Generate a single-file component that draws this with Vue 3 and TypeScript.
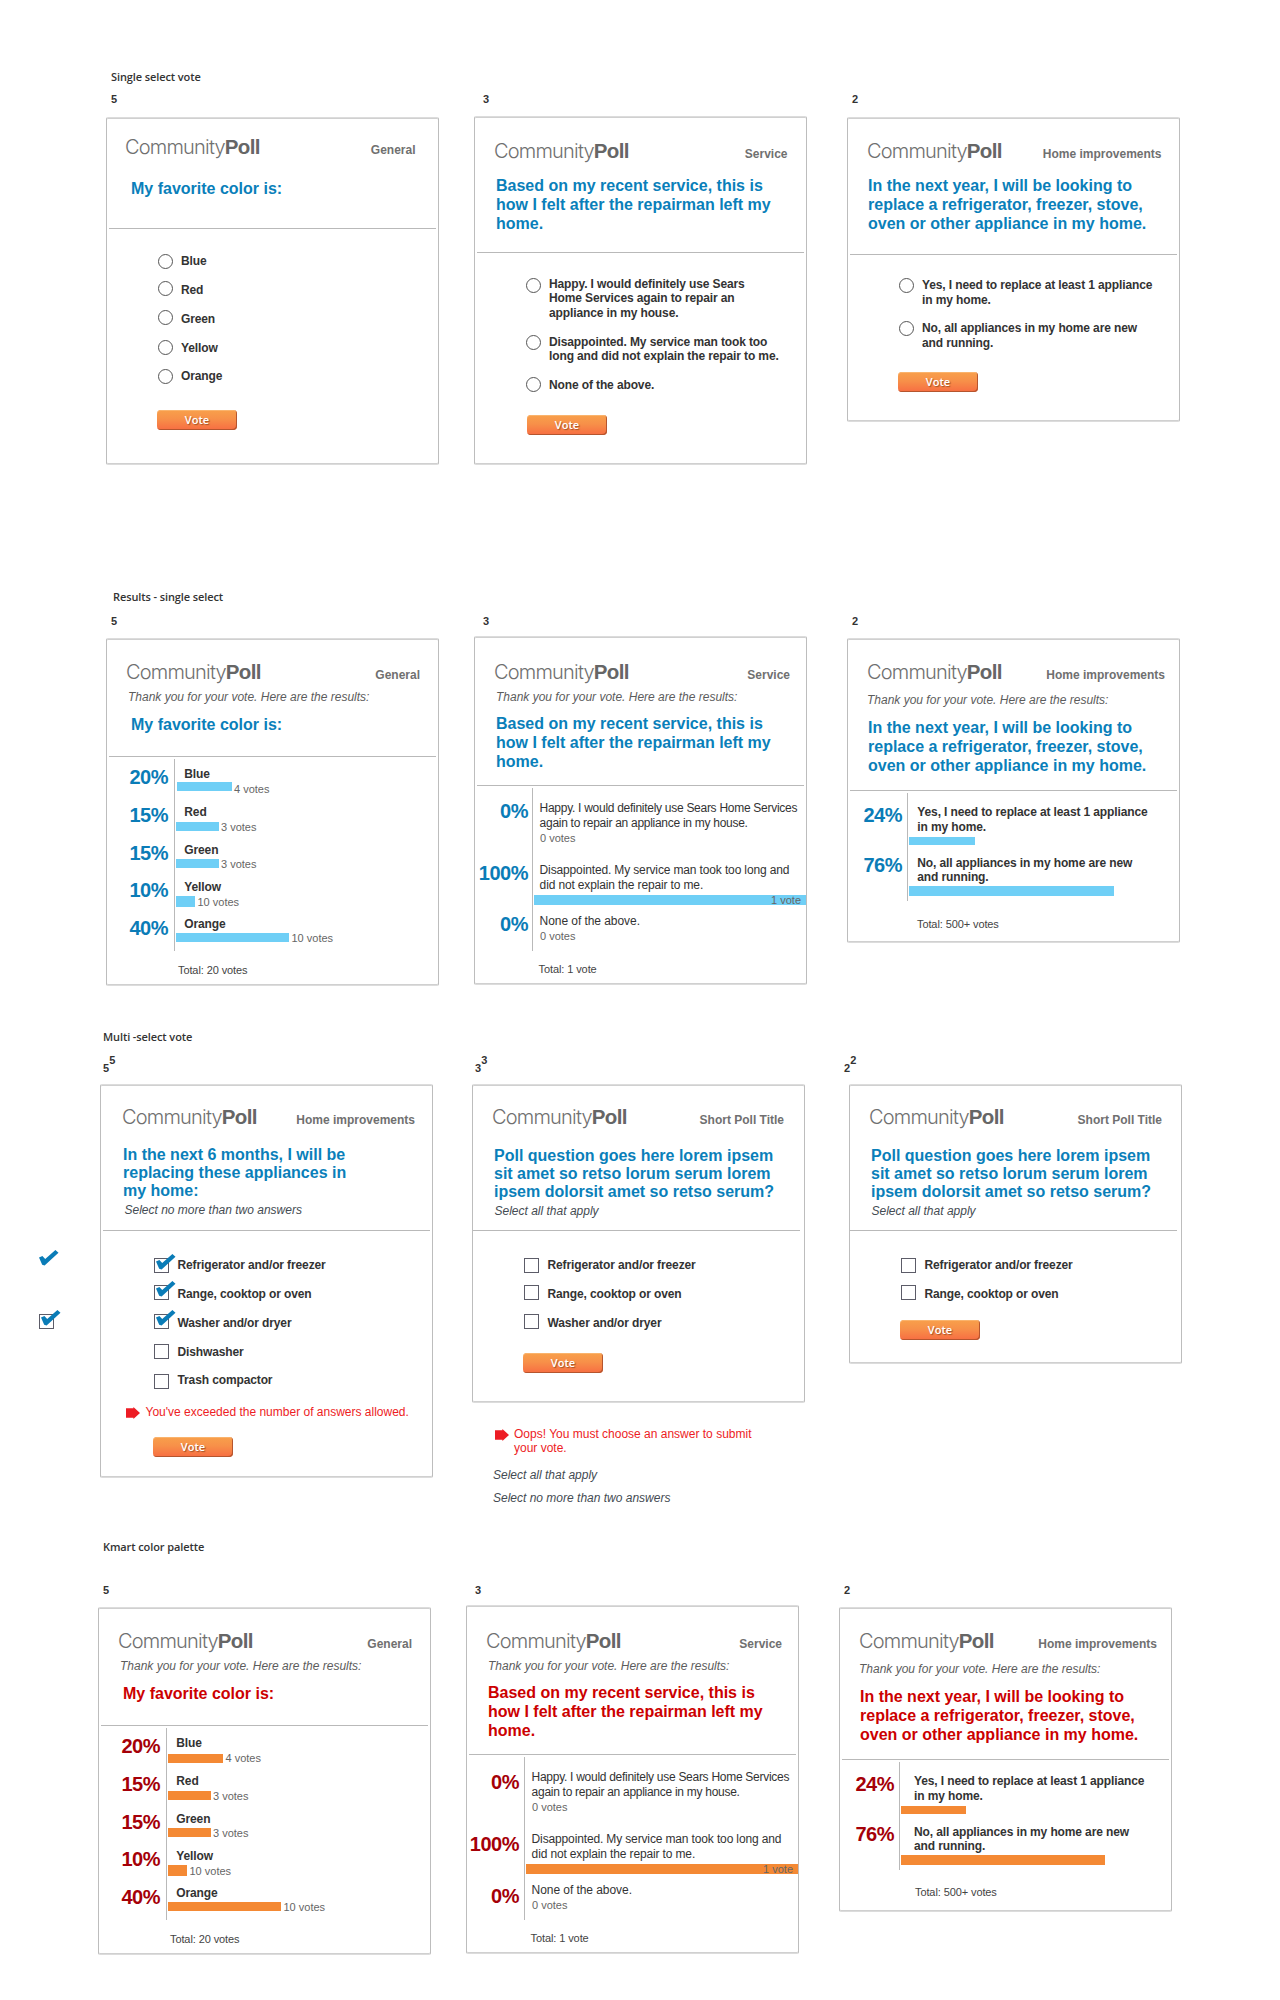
<script setup lang="ts">
interface Choice {
  label: string
  checked?: boolean
  percent?: string
  votes?: string
  bar?: number
}

interface Poll {
  kind: 'radio' | 'check' | 'result'
  size: string
  category: string
  question: string
  choices: Choice[]
  hint?: string
  error?: string
  total?: string
  notes?: boolean
}

interface Board {
  id: string
  title: string
  doubled?: boolean
  polls: Poll[]
}

const colorQuestion = 'My favorite color is:'
const serviceQuestion = 'Based on my recent service, this is\nhow I felt after the repairman left my\nhome.'
const homeQuestion = 'In the next year, I will be looking to\nreplace a refrigerator, freezer, stove,\noven or other appliance in my home.'
const loremQuestion = 'Poll question goes here lorem ipsem\nsit amet so retso lorum serum lorem\nipsem dolorsit amet so retso serum?'
const yes = 'Yes, I need to replace at least 1 appliance\nin my home.'
const no = 'No, all appliances in my home are new\nand running.'
const multi = 'Select all that apply'
const limited = 'Select no more than two answers'
const thanks = 'Thank you for your vote. Here are the results:'

const results = (yesBar: number, noBar: number): Poll[] => [
  {
    kind: 'result', size: '5', category: 'General', question: colorQuestion, total: 'Total: 20 votes',
    choices: [
      { label: 'Blue', percent: '20%', votes: '4 votes', bar: 55 },
      { label: 'Red', percent: '15%', votes: '3 votes', bar: 42.5 },
      { label: 'Green', percent: '15%', votes: '3 votes', bar: 42.5 },
      { label: 'Yellow', percent: '10%', votes: '10 votes', bar: 19 },
      { label: 'Orange', percent: '40%', votes: '10 votes', bar: 113 },
    ],
  },
  {
    kind: 'result', size: '3', category: 'Service', question: serviceQuestion, total: 'Total: 1 vote',
    choices: [
      { label: 'Happy. I would definitely use Sears Home Services\nagain to repair an appliance in my house.', percent: '0%', votes: '0 votes' },
      { label: 'Disappointed. My service man took too long and\ndid not explain the repair to me.', percent: '100%', votes: '1 vote', bar: 272 },
      { label: 'None of the above.', percent: '0%', votes: '0 votes' },
    ],
  },
  {
    kind: 'result', size: '2', category: 'Home improvements', question: homeQuestion, total: 'Total: 500+ votes',
    choices: [
      { label: yes, percent: '24%', bar: yesBar },
      { label: no, percent: '76%', bar: noBar },
    ],
  },
]

const boards: Board[] = [
  {
    id: 'single', title: 'Single select vote',
    polls: [
      { kind: 'radio', size: '5', category: 'General', question: colorQuestion, choices: ['Blue', 'Red', 'Green', 'Yellow', 'Orange'].map((label) => ({ label })) },
      {
        kind: 'radio', size: '3', category: 'Service', question: serviceQuestion,
        choices: [
          { label: 'Happy. I would definitely use Sears\nHome Services again to repair an\nappliance in my house.' },
          { label: 'Disappointed. My service man took too\nlong and did not explain the repair to me.' },
          { label: 'None of the above.' },
        ],
      },
      { kind: 'radio', size: '2', category: 'Home improvements', question: homeQuestion, choices: [{ label: yes }, { label: no }] },
    ],
  },
  { id: 'results', title: 'Results - single select', polls: results(65.5, 204.5) },
  {
    id: 'multi', title: 'Multi -select vote', doubled: true,
    polls: [
      {
        kind: 'check', size: '5', category: 'Home improvements', hint: limited,
        question: 'In the next 6 months, I will be\nreplacing these appliances in\nmy home:',
        error: 'You\'ve exceeded the number of answers allowed.',
        choices: [
          { label: 'Refrigerator and/or freezer', checked: true },
          { label: 'Range, cooktop or oven', checked: true },
          { label: 'Washer and/or dryer', checked: true },
          { label: 'Dishwasher' },
          { label: 'Trash compactor' },
        ],
      },
      {
        kind: 'check', size: '3', category: 'Short Poll Title', hint: multi, question: loremQuestion, notes: true,
        choices: [{ label: 'Refrigerator and/or freezer' }, { label: 'Range, cooktop or oven' }, { label: 'Washer and/or dryer' }],
      },
      {
        kind: 'check', size: '2', category: 'Short Poll Title', hint: multi, question: loremQuestion,
        choices: [{ label: 'Refrigerator and/or freezer' }, { label: 'Range, cooktop or oven' }],
      },
    ],
  },
  { id: 'kmart', title: 'Kmart color palette', polls: results(64.5, 203.5) },
]

const tick = 'M0 7.6 L3.4 6 L6.2 8.9 L16.4 0 L19.5 2.8 L5.6 15.4 L3.2 14.8 Z'
const arrow = 'M0 1.3 H7.4 V0 L14 6 L7.4 12 V10.7 H0 Z'
</script>

<template>
  <main class="page">
    <section v-for="board in boards" :key="board.id" class="board" :class="board.id">
      <h2 class="board-title">{{ board.title }}</h2>
      <div class="columns">
        <div v-for="poll in board.polls" :key="poll.size" class="column" :class="'of-' + poll.size">
          <div class="count">
            <span>{{ poll.size }}</span><span v-if="board.doubled" class="raised">{{ poll.size }}</span>
          </div>
          <article class="card">
            <header class="head">
              <div class="top">
                <div class="brand"><span class="light">Community</span><b>Poll</b></div>
                <div class="category">{{ poll.category }}</div>
              </div>
              <p v-if="poll.kind === 'result'" class="thanks">{{ thanks }}</p>
              <h3 class="question">{{ poll.question }}</h3>
              <p v-if="poll.hint" class="hint">{{ poll.hint }}</p>
            </header>
            <hr class="divider">

            <template v-if="poll.kind === 'result'">
              <ul class="rows">
                <li v-for="choice in poll.choices" :key="choice.label" class="row">
                  <div class="percent">{{ choice.percent }}</div>
                  <div class="value">
                    <div class="name">{{ choice.label }}</div>
                    <div class="meter">
                      <div v-if="choice.bar" class="bar" :style="{ width: choice.bar + 'px' }"></div>
                      <div v-if="choice.votes" class="votes">{{ choice.votes }}</div>
                    </div>
                  </div>
                </li>
              </ul>
              <p class="total">{{ poll.total }}</p>
            </template>

            <template v-else>
              <ul class="options">
                <li v-for="choice in poll.choices" :key="choice.label" class="option">
                  <span class="mark" :class="poll.kind">
                    <svg v-if="choice.checked" class="tick" width="20" height="16" viewBox="0 0 20 16"><path :d="tick" /></svg>
                  </span>
                  <span class="text">{{ choice.label }}</span>
                </li>
              </ul>
              <p v-if="poll.error" class="error">
                <svg width="14" height="12" viewBox="0 0 14 12"><path :d="arrow" /></svg>
                <span>{{ poll.error }}</span>
              </p>
              <button class="vote" type="button">Vote</button>
            </template>
          </article>

          <div v-if="poll.notes" class="notes">
            <p class="error">
              <svg width="14" height="12" viewBox="0 0 14 12"><path :d="arrow" /></svg>
              <span>Oops! You must choose an answer to submit<br>your vote.</span>
            </p>
            <p class="note">{{ multi }}</p>
            <p class="note">{{ limited }}</p>
          </div>
        </div>
      </div>
    </section>

    <svg class="loose-tick" width="20" height="16" viewBox="0 0 20 16"><path :d="tick" /></svg>
    <span class="mark check loose-box">
      <svg class="tick" width="20" height="16" viewBox="0 0 20 16"><path :d="tick" /></svg>
    </span>
  </main>
</template>

<style>
body { background: #fff; }
</style>

<style scoped>
.page {
  position: relative;
  width: 1280px;
  height: 2000px;
  overflow: hidden;
  font-family: "Liberation Sans", Arial, sans-serif;
  font-size: 12px;
  color: #333;
}
h2, h3, p, ul { margin: 0; padding: 0; }
ul { list-style: none; }

/* boards */
.board { box-sizing: border-box; }
.single { height: 560px; padding: 70px 0 0 106px; --num-gap: 9px; --b: 35px; --c: 40px; }
.results { height: 450px; padding: 30px 0 0 106px; --num-gap: 11px; --b: 35px; --c: 40px; }
.multi { height: 500px; padding: 20px 0 0 100px; --num-gap: 18px; --b: 39px; --c: 44px; }
.kmart { height: 490px; padding: 30px 0 0 98px; --num-gap: 30px; --b: 35px; --c: 40px; }
.board-title {
  height: 14px;
  margin-left: 5px;
  font: 600 11px/14px "Open Sans", "Noto Sans", sans-serif;
  letter-spacing: -0.1px;
}
.results .board-title { margin-left: 7px; }
.multi .board-title { margin-left: 3px; }
.columns { display: flex; align-items: flex-start; margin-top: var(--num-gap); }
.column { width: 333px; }
.of-3 { margin-left: var(--b); }
.of-2 { margin-left: var(--c); }
.count {
  display: flex;
  height: 12px;
  padding-left: 5px;
  margin-bottom: 11px;
  font-size: 11px;
  font-weight: bold;
  line-height: 12px;
}
.of-3 .count { padding-left: 9px; margin-bottom: 9px; }
.single .count { margin-bottom: 12px; }
.single .of-3 .count { margin-bottom: 11px; }
.multi .count { padding-left: 3px; margin-bottom: 10px; }
.multi .of-2 .count { padding-left: 0; margin-left: -5px; }
.raised { margin-top: -8px; }

/* card */
.card {
  box-sizing: border-box;
  height: 348px;
  border: 1px solid #bdbdbd;
  border-top-color: #dcdcdc;
  border-bottom-color: #dcdcdc;
  border-radius: 2px;
  box-shadow: inset 0 1px 0 #d0d0d0, inset 0 -1px 0 #d0d0d0;
}
.of-3 .card { height: 349px; }
.of-2 .card { height: 305px; }
.multi .of-5 .card { height: 394px; }
.multi .of-3 .card { height: 319px; }
.multi .of-2 .card { height: 280px; }
.head { box-sizing: border-box; height: var(--head); padding-top: var(--top); }
.of-5 { --head: 117px; --top: 23px; --right: 18px; --q-gap: 11px; --q-left: 24px; }
.of-3 { --head: 148px; --top: 25px; --right: 16px; --q-gap: 10px; --q-left: 21px; }
.of-2 { --head: 151px; --top: 23px; --right: 14px; --q-gap: 11px; --q-left: 20px; }
.single .of-5 { --head: 110px; --top: 19px; --right: 22.5px; --q-gap: 22px; }
.single .of-3 { --head: 135px; --top: 24px; --right: 18.5px; --q-gap: 15px; }
.single .of-2 { --head: 136px; --top: 23px; --right: 17.5px; --q-gap: 15px; }
.multi .column { --head: 145px; --top: 22px; --right: 20px; --q-gap: 20px; --q-left: 21px; }
.multi .of-5 { --right: 17px; --q-gap: 19px; --q-left: 22px; }
.multi .of-2 { --right: 19px; }
.top {
  display: flex;
  justify-content: space-between;
  align-items: baseline;
  height: 20px;
  padding: 0 var(--right) 0 19px;
}
.single .of-5 .top { padding-left: 18px; }
.multi .of-5 .top { padding-left: 21px; }
.brand { font-size: 20px; line-height: 20px; color: #666; white-space: nowrap; }
.light { font-family: Inter, sans-serif; font-weight: 300; letter-spacing: -0.8px; color: #707070; }
.brand b { letter-spacing: -0.7px; font-size: 20.5px; }
.category { font-weight: bold; line-height: 14px; color: #707070; }
.thanks { height: 14px; margin: 8px 0 0 21px; font-style: italic; line-height: 14px; color: #5c5c5c; white-space: nowrap; }
.of-2 .thanks { margin: 11px 0 0 19px; }
.question {
  margin: var(--q-gap) 0 0 var(--q-left);
  font-size: 16px;
  font-weight: bold;
  line-height: 19px;
  color: #0a7fba;
  white-space: pre;
}
.multi .question { line-height: 18px; }
.kmart .question { color: #cc0000; }
.hint { margin: 3px 0 0 21.5px; font-style: italic; line-height: 14px; color: #444b52; }
.multi .of-5 .hint { margin-left: 23.5px; }
.divider { height: 1px; margin: 0 2px; border: 0; background: #b9b9b9; }
.multi .of-3 .divider, .multi .of-2 .divider { margin: 0 4px 0 0; }

/* voting */
.options { padding: 25px 0 0 51px; }
.option { display: flex; gap: 8px; align-items: flex-start; height: 29px; }
.mark { box-sizing: border-box; flex: none; position: relative; width: 15px; height: 15px; border: 1px solid #555; background: #fff; }
.radio { border-radius: 50%; }
.check { border-color: #5c5c68; }
.text { font-weight: bold; line-height: 14px; letter-spacing: -0.12px; white-space: pre; }
.tick { position: absolute; left: 0.5px; top: -5px; fill: #0a7cb7; }
.of-5 .option:nth-child(2) .mark, .of-5 .option:nth-child(3) .mark { margin-top: -2px; }
.of-5 .option:nth-child(4) .mark, .of-5 .option:nth-child(5) .mark { margin-top: -1px; }
.of-5 .option:nth-child(5) .text { margin-top: -1px; }
.single .of-3 .options { display: grid; gap: 14.5px; padding-top: 24px; }
.single .of-3 .option { height: auto; }
.single .of-3 .text { line-height: 14.4px; }
.single .of-3 .mark { margin: 1px 0 -2px; }
.single .of-3 .option:nth-child(2) .mark { margin: 0; }
.single .of-3 .option:nth-child(3) .mark { margin: -1px 0 0; }
.single .of-2 .options { display: grid; gap: 13px; padding-top: 23px; }
.single .of-2 .option { height: 30px; }
.single .of-2 .text { line-height: 15px; }
.multi .options { padding-top: 27px; }
.multi .option { gap: 8.5px; }
.multi .of-5 .options { padding-left: 53px; }
.multi .of-5 .option:nth-child(5) .mark { margin-top: 0; }
.multi .of-3 .option:nth-child(2) .mark, .multi .of-3 .option:nth-child(3) .mark, .multi .of-2 .option:nth-child(2) .mark { margin-top: -2px; }

.vote {
  display: block;
  box-sizing: border-box;
  width: 80px;
  height: 20px;
  margin: 10px 0 0 50px;
  padding: 0;
  border: 0;
  border-radius: 4px;
  background: linear-gradient(#f8a04b, #f79049 45%, #f76d42);
  box-shadow: inset -1px -1px 0 #b5552e, inset 0 1px 0 #fab36c;
  font: 600 11px/18px "Open Sans", "Noto Sans", sans-serif;
  letter-spacing: 0;
  color: #fff;
  text-shadow: 1px 1px 1px rgba(110, 50, 20, 0.6);
}
.single .of-5 .vote { margin: 11px 0 0 50px; }
.single .of-3 .vote { margin: 23px 0 0 52px; }
.single .of-2 .vote { margin-top: 21px; }
.multi .of-5 .vote { margin: 18px 0 0 52px; }
.multi .of-3 .vote { margin-top: 8px; }
.multi .of-2 .vote { margin-top: 4px; }

.error { display: flex; gap: 5.5px; margin: 2px 0 0 25px; line-height: 14px; color: #ed1c24; white-space: nowrap; }
.error svg { flex: none; margin-top: 2px; fill: #ed1c24; }
.notes { padding: 24px 0 0 21px; }
.notes .error { gap: 5px; margin: 0 0 0 2px; }
.note { margin-top: 13px; font-style: italic; line-height: 14px; color: #444b52; }
.note + .note { margin-top: 9px; }

/* results */
.rows { padding-top: 2px; }
.row { display: flex; height: 38px; }
.percent {
  box-sizing: border-box;
  flex: none;
  width: 67px;
  padding: 8px 6px 0 0;
  font-size: 20px;
  font-weight: bold;
  line-height: 20px;
  letter-spacing: -0.5px;
  text-align: right;
  color: #0a7cb7;
  white-space: nowrap;
}
.kmart .percent { color: #a50008; }
.value { flex: 1; min-width: 0; padding-top: 8px; border-left: 1px solid #b9b9b9; }
.name { padding-left: 9.3px; font-weight: bold; line-height: 14px; letter-spacing: -0.12px; white-space: pre; }
.meter { display: flex; align-items: flex-start; padding-left: 1px; }
.bar { flex: none; height: 9px; margin-top: 2px; background: #6fcff6; }
.kmart .bar { background: #f48934; }
.votes { margin: 2px 0 0 2.5px; font-size: 11px; line-height: 12px; color: #666; white-space: nowrap; }
.total { margin: 13px 0 0 71px; font-size: 11px; line-height: 12px; letter-spacing: -0.1px; color: #444; }

.of-5 .row:nth-child(3) { height: 37px; }
.of-5 .row:nth-child(5) { height: 41px; }
.of-5 .row:nth-child(5) .value { padding-top: 7px; }
.of-5 .row:nth-child(1) .bar { margin: 1px 0 0 1px; }
.kmart .of-5 .row:nth-child(1) .bar { margin: 4px 0 0; }
.results .of-5 .row:nth-child(1) .votes { margin-left: 2px; }
.of-5 .row:nth-child(2) .bar { margin-top: 3px; }
.of-5 .row:nth-child(4) .bar { height: 11px; }
.of-5 .row:nth-child(3) .votes, .of-5 .row:nth-child(5) .votes { margin-top: 1px; }

.of-3 .percent { width: 57px; padding: 13px 4px 0 0; }
.kmart .of-3 .percent { padding: 15px 5px 0 0; }
.of-3 .value { padding-top: 13px; }
.of-3 .name { padding-left: 6.6px; font-weight: normal; line-height: 15px; letter-spacing: -0.28px; }
.of-3 .row { height: 62px; }
.of-3 .row:nth-child(2) { height: 55px; }
.of-3 .row:nth-child(2) .name { letter-spacing: -0.14px; }
.of-3 .row:nth-child(3) { height: 46px; }
.of-3 .row:nth-child(3) .name { letter-spacing: -0.06px; }
.of-3 .row:nth-child(3) > div { padding-top: 9px; }
.kmart .of-3 .row:nth-child(3) .percent { padding-top: 12px; }
.of-3 .bar { height: 10px; }
.of-3 .votes { margin: 1px 0 0 6px; }
.of-3 .bar + .votes { width: 60px; margin: 1px 0 0 -65px; text-align: right; }
.of-3 .total { margin: 12px 0 0 63.6px; }

.of-2 .percent { width: 59px; padding: 12px 5px 0 0; }
.of-2 .value { padding-top: 12px; }
.of-2 .name { line-height: 15px; }
.of-2 .row { height: 50px; }
.of-2 .row:nth-child(2) { height: 58px; }
.of-2 .row:nth-child(2) .value { padding-top: 13px; }
.of-2 .row:nth-child(2) .name { line-height: 14px; }
.of-2 .bar { height: 8px; }
.of-2 .row:nth-child(2) .bar { height: 10px; }
.of-2 .total { margin: 17px 0 0 69px; }
.kmart .of-2 .name { padding-left: 14px; }
.kmart .of-2 .total { margin: 16px 0 0 75px; }

/* loose icon samples on the canvas */
.loose-tick { position: absolute; left: 39px; top: 1250px; fill: #0a7cb7; }
.loose-box { position: absolute; left: 39px; top: 1314px; }
</style>
